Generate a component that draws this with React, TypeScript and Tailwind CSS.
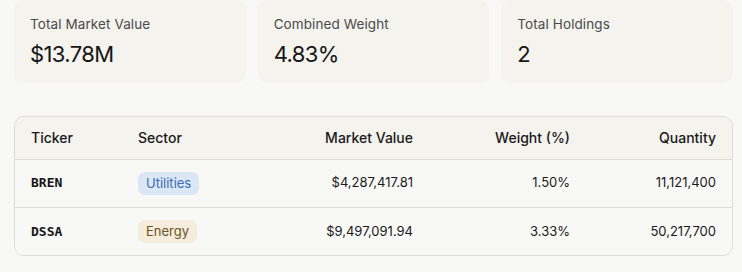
const STATS = [
  { label: 'Total Market Value', value: '$13.78M' },
  { label: 'Combined Weight', value: '4.83%' },
  { label: 'Total Holdings', value: '2' },
];

const ROWS = [
  {
    ticker: 'BREN',
    sector: 'Utilities',
    badge: 'bg-[#dce7f6] text-[#3b6cb4]',
    value: '$4,287,417.81',
    weight: '1.50%',
    qty: '11,121,400',
  },
  {
    ticker: 'DSSA',
    sector: 'Energy',
    badge: 'bg-[#f5ecdb] text-[#6a5526]',
    value: '$9,497,091.94',
    weight: '3.33%',
    qty: '50,217,700',
  },
];

export default function App() {
  return (
    <div className="min-h-[272px] bg-[#f8f8f7] pl-[14px] pr-[9px] text-[#1a1a1a] font-['Inter',sans-serif]">
      {/* summary cards */}
      <div className="grid grid-cols-3 gap-[12px]">
        {STATS.map((s) => (
          <div key={s.label} className="h-[83px] rounded-[10px] bg-[#f4f3ee] px-4 pt-[15px]">
            <div className="text-[13.5px] leading-[18px] tracking-[0.1px] text-[#4a4a4a]">{s.label}</div>
            <div className="mt-[7px] text-[22px] leading-[28px] tracking-[-0.6px] text-[#161616]">{s.value}</div>
          </div>
        ))}
      </div>

      {/* holdings table */}
      <div className="mt-[33px] overflow-hidden rounded-[10px] border border-[#dedcd6]">
        <table className="w-full border-collapse text-[13px]">
          <thead>
            <tr className="h-[42px] bg-[#f4f3ee] border-b border-[#dedcd6] text-[14px]">
              <th className="w-[107px] pl-4 text-left font-medium">Ticker</th>
              <th className="w-[130px] pl-4 text-left font-medium">Sector</th>
              <th className="pr-4 text-right font-medium">Market Value</th>
              <th className="w-[157px] pr-4 text-right font-medium">Weight (%)</th>
              <th className="w-[146px] pr-4 text-right font-medium">Quantity</th>
            </tr>
          </thead>
          <tbody>
            {ROWS.map((r, i) => (
              <tr
                key={r.ticker}
                className={`h-[48px] bg-[#f8f8f7] ${i < ROWS.length - 1 ? 'border-b border-[#dedcd6]' : ''}`}
              >
                <td className="pl-4 font-['DejaVu_Sans_Mono',monospace] text-[13px] font-bold text-[#161616]">{r.ticker}</td>
                <td className="pl-4">
                  <span className={`inline-block rounded-[7px] px-2 py-[3px] text-[13px] leading-[17px] ${r.badge}`}>
                    {r.sector}
                  </span>
                </td>
                <td className="pr-4 text-right">{r.value}</td>
                <td className="pr-4 text-right">{r.weight}</td>
                <td className="pr-4 text-right">{r.qty}</td>
              </tr>
            ))}
          </tbody>
        </table>
      </div>
    </div>
  );
}
